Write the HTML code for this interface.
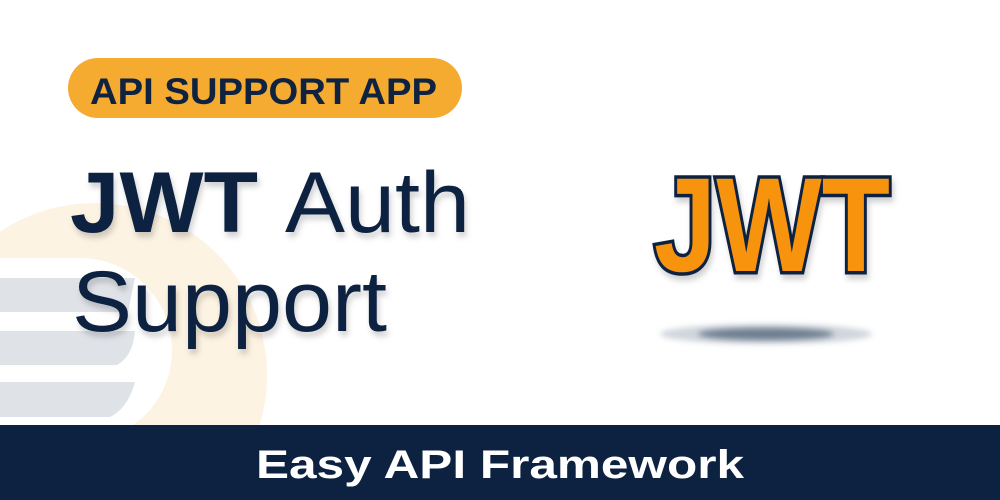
<!DOCTYPE html>
<html><head><meta charset="utf-8"><style>
html,body{margin:0;padding:0;width:1000px;height:500px;overflow:hidden;background:#fff}
svg{display:block}
</style></head><body>
<svg width="1000" height="500" viewBox="0 0 1000 500" xmlns="http://www.w3.org/2000/svg">
<defs>
<filter id="sh" x="-10%" y="-10%" width="130%" height="140%"><feDropShadow dx="2" dy="5" stdDeviation="3" flood-color="#000" flood-opacity="0.18"/></filter>
<filter id="bl" x="-20%" y="-100%" width="140%" height="300%"><feGaussianBlur stdDeviation="3"/></filter>
<clipPath id="c"><rect x="0" y="0" width="1000" height="425"/></clipPath>
</defs>
<g clip-path="url(#c)">
<circle cx="95" cy="375" r="172" fill="#fdf3e3"/>
<path d="M0 258 H80 A92 92 0 0 1 80 442 H0 Z" fill="#fff"/>
<path d="M0 278 H135 L128 312 H0 Z" fill="#dfe3e8"/>
<path d="M0 331 H135 Q133 356 117 365 H0 Z" fill="#dfe3e8"/>
<path d="M0 382 H135 Q128 408 110 417 H0 Z" fill="#dfe3e8"/>
</g>
<rect x="68" y="58" width="394" height="60" rx="30" fill="#f5aa30"/>
<text x="90" y="104" font-family="Liberation Sans, sans-serif" font-weight="700" font-size="37" fill="#0f2240" textLength="347" lengthAdjust="spacingAndGlyphs">API SUPPORT APP</text>
<g filter="url(#sh)" fill="#0f2240" font-family="Liberation Sans, sans-serif">
<text x="70" y="232" font-size="86" font-weight="700" textLength="188" lengthAdjust="spacingAndGlyphs">JWT</text>
<text x="285" y="232" font-size="86" font-weight="400" textLength="185" lengthAdjust="spacingAndGlyphs">Auth</text>
<text x="72" y="331" font-size="86" font-weight="400" textLength="315" lengthAdjust="spacingAndGlyphs">Support</text>
</g>
<ellipse cx="766" cy="334" rx="106" ry="10" fill="#d0d6dd" filter="url(#bl)"/>
<ellipse cx="766" cy="334" rx="68" ry="6" fill="#707f90" filter="url(#bl)"/>
<text x="654" y="271" font-family="Liberation Sans, sans-serif" font-weight="700" font-size="134" fill="#f7930e" stroke="#0f2240" stroke-width="7" stroke-linejoin="miter" paint-order="stroke" textLength="236" lengthAdjust="spacingAndGlyphs" filter="url(#sh)">JWT</text>
<rect x="0" y="425" width="1000" height="75" fill="#0d2240"/>
<text x="500" y="478" text-anchor="middle" font-family="Liberation Sans, sans-serif" font-weight="700" font-size="40" fill="#fff" textLength="488" lengthAdjust="spacingAndGlyphs">Easy API Framework</text>
</svg>
</body></html>
